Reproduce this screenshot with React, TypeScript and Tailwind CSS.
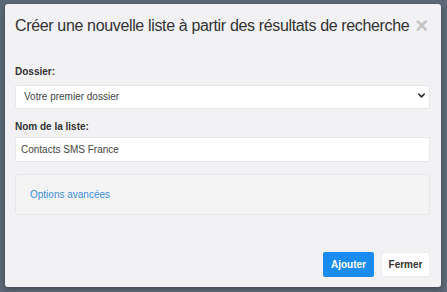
import { useState } from 'react'

function Chevron() {
  return (
    <svg viewBox="0 0 10 10" className="h-[9px] w-[9px]" fill="none" stroke="#333" strokeWidth="1.8" strokeLinecap="round" strokeLinejoin="round">
      <path d="M2 3.5 L5 6.5 L8 3.5" />
    </svg>
  )
}

export default function App() {
  const [folder, setFolder] = useState('Votre premier dossier')
  const [name, setName] = useState('Contacts SMS France')

  return (
    <div className="h-[292px] w-[447px] overflow-hidden bg-[#5d6978] font-['Liberation_Sans',Arial,sans-serif] text-[#333]">
      <div className="ml-[5px] mt-[4px] flex h-[283px] w-[436px] flex-col rounded-[3px] bg-[#f2f2f4] px-[10px] shadow-[0_2px_6px_rgba(0,0,0,0.35)]">
        {/* header */}
        <div className="flex h-[44px] items-center justify-between">
          <h2 className="whitespace-nowrap text-[16px] leading-[22px] font-normal tracking-[-0.35px] text-[#333]">
            Créer une nouvelle liste à partir des résultats de recherche
          </h2>
          <button className="mr-[3px] shrink-0 text-[22px] leading-none font-bold text-[#c4c4c6]">×</button>
        </div>

        {/* body */}
        <label className="mt-[17px] block text-[10px] leading-[14px] font-bold text-[#333]">Dossier:</label>
        <div className="relative mt-[4px] mr-[1px]">
          <select
            value={folder}
            onChange={(e) => setFolder(e.target.value)}
            className="h-[24px] w-full appearance-none rounded-[2px] border border-[#e8e8ea] bg-white pl-[8px] text-[10px] text-[#444] outline-none"
          >
            <option>Votre premier dossier</option>
          </select>
          <span className="pointer-events-none absolute top-[8px] right-[4px]">
            <Chevron />
          </span>
        </div>

        <label className="mt-[11px] block text-[10px] leading-[14px] font-bold text-[#333]">Nom de la liste:</label>
        <input
          value={name}
          onChange={(e) => setName(e.target.value)}
          className="mt-[3px] mr-[1px] h-[25px] rounded-[2px] border border-[#e8e8ea] bg-white px-[5px] text-[10px] text-[#444] outline-none"
        />

        <div className="mt-[12px] mr-[1px] flex h-[41px] items-center rounded-[3px] border border-[#e6e6e8] bg-[#f4f4f5] px-[14px]">
          <a className="text-[10px] text-[#3b8fdc]">Options avancées</a>
        </div>

        {/* footer */}
        <div className="mt-[37px] mr-[1px] flex justify-end gap-[7px]">
          <button className="h-[25px] w-[51px] rounded-[2px] bg-[#1a8cf0] text-[10px] font-bold text-white">Ajouter</button>
          <button className="h-[25px] w-[49px] rounded-[2px] border border-[#ececee] bg-white text-[10px] font-bold text-[#333]">Fermer</button>
        </div>
      </div>
    </div>
  )
}
